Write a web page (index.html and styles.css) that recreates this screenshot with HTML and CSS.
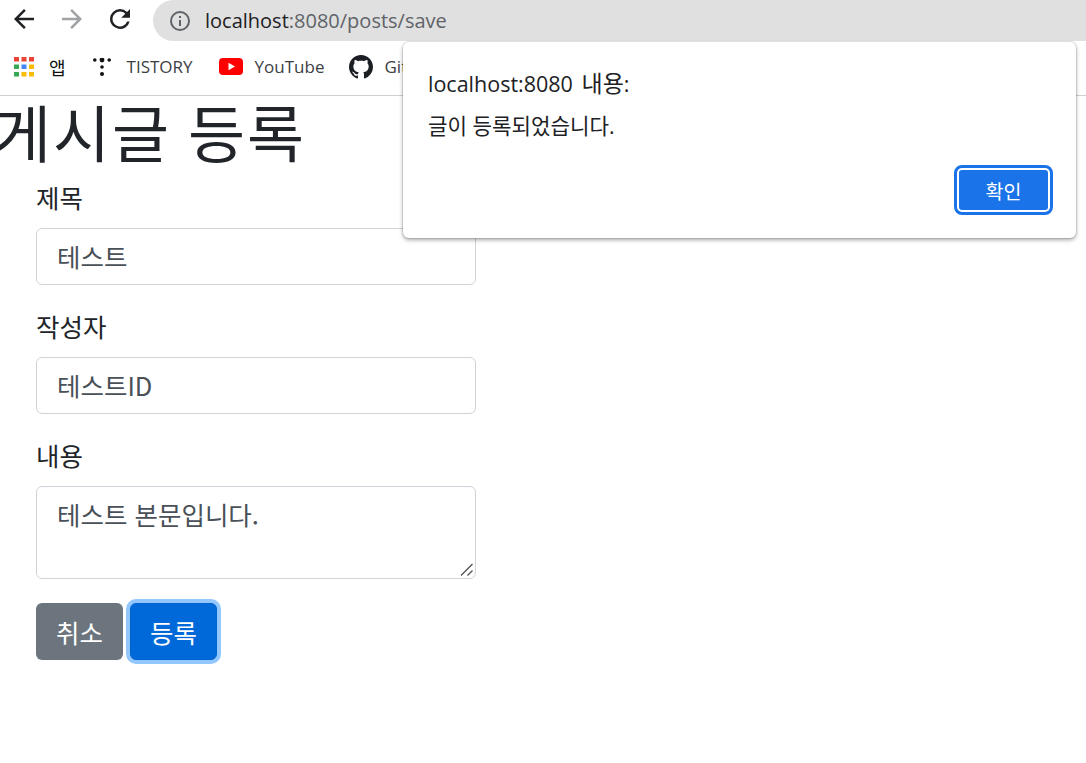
FILE: index.html
```html
<!DOCTYPE html>
<html lang="ko">
<head>
<meta charset="utf-8">
<title>게시글 등록</title>
<link rel="stylesheet" href="styles.css">
</head>
<body>
<header class="toolbar">
  <svg class="nav-icon" viewBox="0 0 24 24"><path fill="#202124" d="M20 11H7.830l5.590-5.590L12 4l-8 8 8 8 1.410-1.410L7.830 13H20v-2z"/></svg>
  <svg class="nav-icon" viewBox="0 0 24 24"><path fill="#a0a2a5" d="M12 4l-1.410 1.410L16.170 11H4v2h12.170l-5.580 5.590L12 20l8-8z"/></svg>
  <svg class="nav-icon" viewBox="0 0 24 24"><path fill="#202124" d="M17.650 6.350A7.960 7.960 0 0 0 12 4a8 8 0 1 0 7.730 10h-2.080A6 6 0 1 1 12 6c1.660 0 3.140.690 4.220 1.780L13 11h7V4l-2.350 2.350z"/></svg>
  <div class="omnibox">
    <svg class="info-icon" viewBox="0 0 24 24"><path fill="#5f6368" d="M11 7h2v2h-2zm0 4h2v6h-2zm1-9a10 10 0 1 0 0 20 10 10 0 0 0 0-20zm0 18a8 8 0 1 1 0-16 8 8 0 0 1 0 16z"/></svg>
    <span class="url"><span class="url-host">localhost</span>:8080/posts/save</span>
  </div>
</header>
<nav class="bookmarks">
  <a class="bookmark bookmark-apps">
    <svg class="bm-icon" viewBox="0 0 20 20">
      <rect x="0" y="0" width="5" height="4.500" fill="#ea4335"/><rect x="7.500" y="0" width="5" height="4.500" fill="#ea4335"/><rect x="15" y="0" width="5" height="4.500" fill="#ea4335"/>
      <rect x="0" y="7.500" width="5" height="4.500" fill="#34a853"/><rect x="7.500" y="7.500" width="5" height="4.500" fill="#4285f4"/><rect x="15" y="7.500" width="5" height="4.500" fill="#fbbc05"/>
      <rect x="0" y="15" width="5" height="4.500" fill="#34a853"/><rect x="7.500" y="15" width="5" height="4.500" fill="#fbbc05"/><rect x="15" y="15" width="5" height="4.500" fill="#fbbc05"/>
    </svg>
    <span class="bm-label bm-dark">앱</span>
  </a>
  <a class="bookmark bookmark-tistory">
    <svg class="bm-icon-tistory" viewBox="0 0 18 18"><g fill="#111"><circle cx="1.800" cy="2" r="1.800"/><circle cx="9" cy="2" r="2.400"/><circle cx="16.200" cy="2" r="1.800"/><circle cx="9" cy="9" r="1.800"/><circle cx="9" cy="16" r="2"/></g></svg>
    <span class="bm-label">TISTORY</span>
  </a>
  <a class="bookmark bookmark-youtube">
    <svg class="bm-icon-wide" viewBox="0 0 24 17"><rect width="24" height="17" rx="4" fill="#f00"/><path fill="#fff" d="M9.500 4.800v7.400l6.500-3.700z"/></svg>
    <span class="bm-label">YouTube</span>
  </a>
  <a class="bookmark">
    <svg class="bm-icon-gh" viewBox="0 0 16 16"><path fill="#1b1f23" fill-rule="evenodd" d="M8 0C3.580 0 0 3.580 0 8c0 3.540 2.290 6.530 5.470 7.590.4.070.55-.17.55-.38 0-.19-.01-.82-.01-1.490-2.010.37-2.530-.49-2.690-.94-.09-.23-.48-.94-.82-1.130-.28-.15-.68-.52-.01-.53.630-.01 1.080.58 1.230.82.720 1.210 1.870.87 2.330.66.070-.52.280-.87.510-1.070-1.780-.2-3.640-.89-3.640-3.950 0-.87.310-1.590.82-2.150-.08-.2-.36-1.020.08-2.120 0 0 .67-.21 2.200.82.640-.18 1.320-.27 2-.27s1.360.09 2 .27c1.530-1.040 2.200-.82 2.200-.82.440 1.100.16 1.920.08 2.120.51.560.82 1.270.82 2.150 0 3.070-1.870 3.750-3.650 3.950.29.25.54.73.54 1.480 0 1.070-.01 1.930-.01 2.200 0 .21.150.46.550.38A8.010 8.010 0 0 0 16 8c0-4.420-3.580-8-8-8z"/></svg>
    <span class="bm-label">GitHub</span>
  </a>
</nav>
<main class="page">
  <h1 class="title">게시글 등록</h1>
  <form class="post-form">
    <div class="field">
      <label class="field-label">제목</label>
      <input class="control control-input" type="text" value="테스트">
    </div>
    <div class="field">
      <label class="field-label">작성자</label>
      <input class="control control-input" type="text" value="테스트ID">
    </div>
    <div class="field">
      <label class="field-label">내용</label>
      <div class="area-wrap">
        <textarea class="control control-area">테스트 본문입니다.</textarea>
        <svg class="grip" viewBox="0 0 13 13"><path stroke="#555" stroke-width="1.400" fill="none" d="M1 12.500L12.500 1M7.500 12.500l5-5"/></svg>
      </div>
    </div>
    <div class="actions">
      <a class="btn btn-secondary">취소</a>
      <button type="button" class="btn btn-primary">등록</button>
    </div>
  </form>
</main>
<div class="dialog" role="alertdialog">
  <div class="dialog-title">localhost:8080 <span class="dialog-title-ko">내용</span>:</div>
  <div class="dialog-message">글이 등록되었습니다.</div>
  <div class="dialog-actions"><button type="button" class="dialog-ok">확인</button></div>
</div>
</body>
</html>
```
FILE: styles.css
```css
* { box-sizing: border-box; }
html, body { margin: 0; padding: 0; height: 100%; overflow: hidden; background: #fff; }
body { font-family: "Noto Sans CJK KR", "Noto Sans", sans-serif; color: #212529; position: relative; }

.toolbar { height: 42px; display: flex; align-items: center; padding-left: 9px; }
.nav-icon { width: 30px; height: 30px; margin-right: 18px; flex: none; margin-top: -4px; }
.omnibox { flex: 1; height: 41px; margin-top: -1px; background: #e0e0e0; border-radius: 21px 0 0 21px; display: flex; align-items: center; padding-left: 15px; }
.info-icon { width: 24px; height: 24px; flex: none; margin-right: 13px; }
.url { font-family: "Open Sans", sans-serif; font-size: 20px; color: #5f6368; }
.url-host { color: #202124; }

.bookmarks { height: 54px; padding: 0 0 4px 14px; border-bottom: 1px solid #d0d0d0; display: flex; align-items: center; font-family: "Open Sans", "Noto Sans CJK KR", sans-serif; font-size: 17px; }
.bookmark { display: flex; align-items: center; margin-right: 25px; flex: none; }
.bm-icon { width: 20px; height: 20px; margin-right: 15px; }
.bm-icon-tistory { width: 18px; height: 18px; margin-right: 16px; }
.bm-icon-wide { width: 24px; height: 17px; margin-right: 12px; }
.bm-icon-gh { width: 24px; height: 24px; margin-right: 12px; }
.bm-label { color: #3c4043; }
.bm-dark { color: #111; font-size: 18px; }
.bookmark-apps { margin-right: 27px; }
.bookmark-tistory { margin-right: 26px; }
.bookmark-youtube { margin-right: 24px; }

.title { margin: 0 0 14px -6px; font-size: 62px; letter-spacing: 1.900px; word-spacing: -2px; line-height: 70px; font-weight: 400; white-space: nowrap; }
.post-form { margin-left: 36px; width: 440px; }
.field { margin-bottom: 24px; }
.field-label { display: block; font-size: 25.500px; line-height: 34px; margin-bottom: 14px; }
.control { display: block; width: 100%; height: 57px; padding: 9px 20px; font-family: inherit; font-size: 25.500px; line-height: 36px; color: #495057; background: #fff; border: 1px solid #ced4da; border-radius: 6px; outline: 0; }
.control-input { padding: 8px 20px 10px; }
.area-wrap { position: relative; }
.control-area { height: 93px; resize: none; }
.grip { position: absolute; right: 3px; bottom: 3px; width: 13px; height: 13px; }
.actions { display: flex; gap: 7px; }
.btn { width: 87px; height: 57px; display: flex; align-items: center; justify-content: center; font-family: inherit; font-size: 25.500px; color: #fff; border-radius: 6px; border: 1px solid transparent; }
.btn-secondary { background: #6c757d; }
.btn-primary { background: #0069d9; border-color: #0062cc; box-shadow: 0 0 0 4px rgba(38, 143, 255, .5); }

.dialog { position: absolute; left: 403px; top: 42px; width: 673px; height: 196px; background: #fff; border-radius: 6px; box-shadow: 0 0 0 1px rgba(0,0,0,.08), 0 2px 4px rgba(0,0,0,.35); padding: 23px 24px 0 25px; font-family: "Open Sans", "Noto Sans CJK KR", sans-serif; color: #202124; }
.dialog-title { font-size: 21.500px; line-height: 36px; word-spacing: 3px; }
.dialog-title-ko { font-size: 23px; }
.dialog-message { font-size: 21.200px; line-height: 24px; margin-top: 12px; }
.dialog-actions { display: flex; justify-content: flex-end; margin-top: 30px; padding-right: 2px; }
.dialog-ok { width: 93px; height: 44px; background: #1a73e8; color: #fff; font: inherit; font-size: 19.500px; border: 2px solid #fff; border-radius: 5px; outline: 3px solid #1a73e8; outline-offset: 0; }
```
